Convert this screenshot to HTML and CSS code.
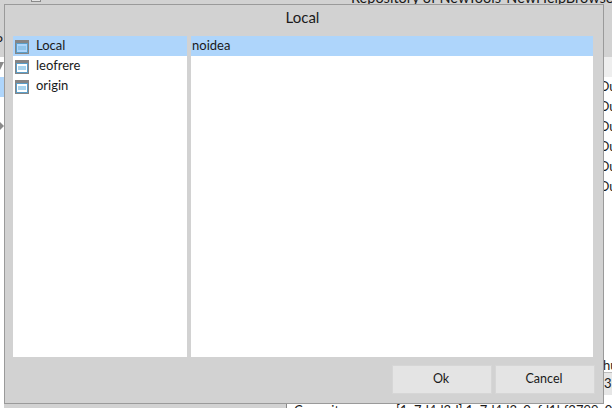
FILE: index.html
```html
<!DOCTYPE html>
<html lang="en">
<head>
    <meta charset="UTF-8" />
    <title>Local</title>
    <link rel="stylesheet" href="styles.css">
</head>
<body>
    <div class="backdrop">
        <span class="bg-tab"></span>
        <div class="bg-title">Repository of NewTools-NewHelpBrowser</div>
        <div class="bg-label">P</div>
        <div class="bg-left">
            <div class="bg-row"><span class="arrow-down"></span></div>
            <div class="bg-row bg-sel"></div>
            <div class="bg-row"></div>
            <div class="bg-row"><span class="arrow-right"></span></div>
        </div>
        <div class="bg-right">
            <div class="bg-head"></div>
            <span>Ou</span><span>Ou</span><span>Ou</span><span>Ou</span><span>Ou</span><span>Ou</span>
        </div>
        <div class="bg-corner">
            <div class="bg-corner-text">hu</div>
            <div class="bg-corner-field">3:</div>
        </div>
        <div class="bg-commit"><span class="bg-key">Commit:</span><span>[1a7d4d3d] 1a7d4d3c0efd1bf3799c0000</span></div>
    </div>

    <div class="dialog">
        <div class="dialog-title">Local</div>
        <div class="panes">
            <div class="list list-left">
                <div class="row selected">
                    <svg class="repo-icon" width="14" height="14" viewBox="0 0 14 14"><rect width="14" height="14" fill="#858585"/><rect x="1" y="3" width="12" height="10" fill="#5a9ec9"/><rect x="2" y="4" width="10" height="8" fill="#aed5fb"/><rect x="3" y="6" width="8" height="4" fill="#8fc4ea"/></svg>
                    <span>Local</span>
                </div>
                <div class="row">
                    <svg class="repo-icon" width="14" height="14" viewBox="0 0 14 14"><rect width="14" height="14" fill="#858585"/><rect x="1" y="3" width="12" height="10" fill="#5a9ec9"/><rect x="2" y="4" width="10" height="8" fill="#fff"/><rect x="3" y="6" width="8" height="4" fill="#a8d4ee"/></svg>
                    <span>leofrere</span>
                </div>
                <div class="row">
                    <svg class="repo-icon" width="14" height="14" viewBox="0 0 14 14"><rect width="14" height="14" fill="#858585"/><rect x="1" y="3" width="12" height="10" fill="#5a9ec9"/><rect x="2" y="4" width="10" height="8" fill="#fff"/><rect x="3" y="6" width="8" height="4" fill="#a8d4ee"/></svg>
                    <span>origin</span>
                </div>
            </div>
            <div class="list list-right">
                <div class="row selected branch">noidea</div>
            </div>
        </div>
        <div class="actions">
            <button class="btn">Ok</button>
            <button class="btn">Cancel</button>
        </div>
    </div>
</body>
</html>
```

FILE: styles.css
```css
html, body {
    margin: 0;
    height: 100%;
}
body {
    width: 612px;
    height: 408px;
    overflow: hidden;
    position: relative;
    font-family: Lato, "Noto Sans", sans-serif;
    font-size: 13px;
    color: #1a1a1a;
    background: #d2d2d2;
}
/* window behind the dialog, only its edges show */
.backdrop {
    position: absolute;
    inset: 0;
    overflow: hidden;
}
.bg-tab {
    position: absolute;
    left: 31px;
    top: -8px;
    width: 10px;
    height: 10px;
    box-sizing: border-box;
    background: #e4e4e4;
    border: 1px solid #8a8a8a;
}
.bg-title {
    position: absolute;
    left: 351px;
    top: -11px;
    font-size: 14.5px;
    white-space: nowrap;
}
.bg-label {
    position: absolute;
    left: -5px;
    top: 33px;
    font-size: 13px;
}
.bg-left {
    position: absolute;
    left: 0;
    top: 57px;
    width: 4px;
    height: 351px;
    background: #fff;
}
.bg-row {
    height: 20px;
    position: relative;
}
.bg-sel {
    background: #aed5fb;
}
.arrow-down {
    position: absolute;
    left: -4px;
    top: 5px;
    border-left: 4px solid transparent;
    border-right: 4px solid transparent;
    border-top: 8px solid #8a8a8a;
}
.arrow-right {
    position: absolute;
    left: 0;
    top: 5px;
    border-top: 4px solid transparent;
    border-bottom: 4px solid transparent;
    border-left: 4px solid #8a8a8a;
}
.bg-right {
    position: absolute;
    left: 604px;
    top: 57px;
    width: 8px;
    height: 306px;
    background: #fff;
    overflow: hidden;
    display: flex;
    flex-direction: column;
}
.bg-head {
    flex: none;
    height: 20px;
    background: #eeeeee;
}
.bg-right span {
    flex: none;
    height: 20px;
    line-height: 18px;
    margin-left: -5px;
}
.bg-corner {
    position: absolute;
    left: 604px;
    top: 360px;
    width: 8px;
    height: 48px;
    background: #fff;
    overflow: hidden;
}
.bg-corner-text {
    height: 12px;
    line-height: 10px;
    margin-left: -1px;
}
.bg-corner-field {
    height: 22px;
    line-height: 20px;
    background: #e6e6e6;
    border-top: 1px solid #bdbdbd;
}
.bg-commit {
    position: absolute;
    left: 286px;
    top: 404px;
    width: 326px;
    height: 4px;
    overflow: hidden;
    background: #fff;
    border-left: 1px solid #8a8a8a;
    line-height: 12px;
    padding-left: 7px;
    white-space: nowrap;
    box-sizing: border-box;
    display: flex;
}
.bg-key {
    width: 102px;
    flex: none;
}
.dialog {
    position: absolute;
    left: 4px;
    top: 4px;
    width: 600px;
    height: 400px;
    box-sizing: border-box;
    background: #d2d2d2;
    border: 1px solid #9a9a9a;
    display: flex;
    flex-direction: column;
}
.dialog-title {
    height: 31px;
    line-height: 25px;
    text-align: center;
    font-size: 15px;
    padding-right: 3px;
}
.panes {
    display: flex;
    gap: 4px;
    height: 321px;
    padding-left: 8px;
}
.list {
    background: #fff;
    height: 321px;
}
.list-left {
    width: 174px;
}
.list-right {
    width: 402px;
}
.row {
    height: 20px;
    box-sizing: border-box;
    padding: 0 0 2px 2px;
    display: flex;
    align-items: center;
    gap: 7px;
}
.row.selected {
    background: #aed5fb;
}
.branch {
    padding-left: 1px;
}
.repo-icon {
    flex: none;
    margin-top: 4px;
}
.actions {
    display: flex;
    justify-content: flex-end;
    gap: 3px;
    padding: 8px 8px 0 0;
}
.btn {
    width: 100px;
    height: 29px;
    box-sizing: border-box;
    background: #e4e4e4;
    border: 1px solid #d6d6d6;
    font-family: Lato, "Noto Sans", sans-serif;
    font-size: 12.5px;
    color: #1a1a1a;
    padding: 0 2px 2px 0;
}
```
